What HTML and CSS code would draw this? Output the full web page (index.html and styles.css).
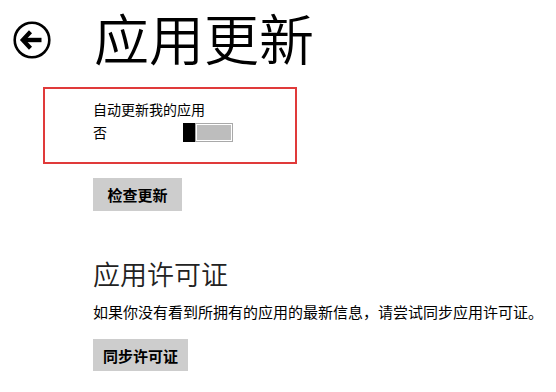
FILE: index.html
```html
<!DOCTYPE html>
<html lang="zh-CN">
<head>
<meta charset="utf-8">
<link rel="stylesheet" href="styles.css">
</head>
<body>
<div class="page">
  <header class="header">
    <button class="back" aria-label="返回">
      <svg width="38" height="38" viewBox="0 0 38 38">
        <circle cx="19" cy="19" r="17.3" fill="none" stroke="#000" stroke-width="2.6"/>
        <path d="M17.5 10.8 L9.8 19 L17.5 27.2" fill="none" stroke="#000" stroke-width="4.2" stroke-linejoin="miter" stroke-linecap="butt"/>
        <path d="M11 19 H28.5" fill="none" stroke="#000" stroke-width="4.4"/>
      </svg>
    </button>
    <h1 class="title">应用更新</h1>
  </header>
  <section class="content">
    <div class="highlight">
      <div class="label">自动更新我的应用</div>
      <div class="toggle-row">
        <span class="state">否</span>
        <span class="toggle"><span class="thumb"></span><span class="track"></span></span>
      </div>
    </div>
    <div class="inner">
      <button class="btn">检查更新</button>
      <h2 class="subtitle">应用许可证</h2>
      <p class="desc">如果你没有看到所拥有的应用的最新信息，请尝试同步应用许可证。</p>
      <button class="btn btn-sync">同步许可证</button>
    </div>
  </section>
</div>
</body>
</html>
```
FILE: styles.css
```css
html, body {
  margin: 0;
  padding: 0;
  background: #fff;
}
body {
  font-family: "Noto Sans CJK SC", "Noto Sans", sans-serif;
  color: #000;
}
.page {
  width: 556px;
  height: 392px;
  overflow: hidden;
}
.header {
  display: flex;
  align-items: flex-start;
  padding: 0 0 0 13px;
  height: 80px;
}
.back {
  margin: 21px 0 0 0;
  padding: 0;
  border: 0;
  background: none;
  width: 38px;
  height: 38px;
  display: block;
  flex: none;
}
.back svg { display: block; }
.title {
  margin: -4px 0 0 43px;
  font-size: 55px;
  font-weight: 350;
  line-height: 80px;
  letter-spacing: 0;
  white-space: nowrap;
}
.content {
  padding-left: 43px;
}
.highlight {
  border: 2px solid #e03a3a;
  margin-top: 7px;
  padding: 10px 0 0 48px;
  box-sizing: content-box;
  width: 202px;
  height: 63px;
}
.label {
  font-size: 14px;
  line-height: 20px;
}
.toggle-row {
  display: flex;
  align-items: center;
  height: 24px;
  margin-top: 1px;
}
.state {
  font-size: 14px;
  width: 90px;
}
.toggle {
  display: flex;
  width: 50px;
  height: 19px;
}
.thumb {
  width: 12px;
  height: 19px;
  background: #000;
}
.track {
  flex: 1;
  background: #bdbdbd;
  border: 1px solid #fff;
  outline: 1px solid #a9a9a9;
  outline-offset: -1px;
  box-shadow: inset 0 0 0 1px #fff;
}
.inner {
  padding-left: 50px;
}
.btn {
  display: block;
  margin: 14px 0 0 0;
  padding: 0 10px;
  min-width: 89px;
  height: 33px;
  border: 0;
  background: #cdcdcd;
  font-family: inherit;
  font-size: 15px;
  font-weight: 700;
  color: #000;
}
.subtitle {
  margin: 45px 0 0 0;
  font-size: 27px;
  font-weight: 350;
  line-height: 36px;
  color: #222;
}
.desc {
  margin: 9px 0 0 0;
  font-size: 15px;
  line-height: 22px;
  white-space: nowrap;
}
.btn-sync {
  margin-top: 16px;
  height: 32px;
}
```
